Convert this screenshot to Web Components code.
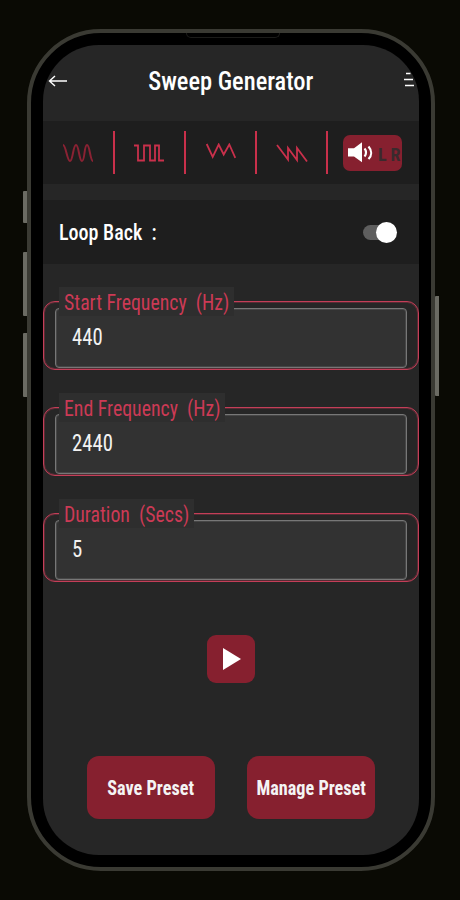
<!DOCTYPE html>
<html><head><meta charset="utf-8"><title>Sweep Generator</title>
<style>
html,body{margin:0;padding:0;background:#0a0a04;height:900px;overflow:hidden}
body{font-family:"Roboto Condensed","Liberation Sans",sans-serif;color:#fff}
</style></head><body>
<phone-frame>
  <title-bar>Sweep Generator</title-bar>
  <tone-bar></tone-bar>
  <loop-row>Loop Back&nbsp; :</loop-row>
  <freq-field label="Start Frequency&nbsp; (Hz)" value="440" w="175"></freq-field>
  <freq-field label="End Frequency&nbsp; (Hz)" value="2440" w="166"></freq-field>
  <freq-field label="Duration&nbsp; (Secs)" value="5" w="135"></freq-field>
  <play-button></play-button>
  <preset-bar>
    <preset-button>Save Preset</preset-button>
    <preset-button>Manage Preset</preset-button>
  </preset-bar>
</phone-frame>
<script>
function def(name,html,extra){
  const C=class extends HTMLElement{
    constructor(){super();this.attachShadow({mode:'open'}).innerHTML=html;}
    connectedCallback(){if(extra)extra(this,this.shadowRoot);}
  };
  customElements.define(name,C);
}
def('phone-frame',`<style>
:host{display:block;position:relative;box-sizing:border-box;width:408px;height:842px;margin:29px 0 0 27px;border:4px solid #3a3a33;border-radius:74px;background:#000;padding:12px}
.screen{width:376px;height:810px;border-radius:56px;background:#262626;overflow:hidden;display:flex;flex-direction:column}
.notch{position:absolute;left:155px;top:0;width:92px;height:4px;border:1px solid #1c1c1a;border-top:0;border-radius:0 0 5px 5px}
.btn{position:absolute;background:#6b6b63;width:4px;border-radius:1px 0 0 1px;left:-8px}
.r{left:auto;right:-8px}
</style>
<div class="notch"></div>
<i class="btn" style="top:158px;height:32px"></i>
<i class="btn" style="top:219px;height:64px"></i>
<i class="btn" style="top:300px;height:64px"></i>
<i class="btn r" style="top:263px;height:100px"></i>
<div class="screen"><slot></slot></div>`);
def('title-bar',`<style>
:host{display:flex;flex:none;height:76px;box-sizing:border-box;position:relative;justify-content:center;padding-top:21px;font-size:26px;font-weight:500;line-height:30px}
svg{position:absolute}
span{display:inline-block;transform:scaleX(.94);white-space:nowrap}
</style>
<svg style="left:5px;top:27px" width="20" height="18" viewBox="0 0 20 18" fill="none" stroke="#fff" stroke-width="1.400"><path d="M19 9H1.500M7 4L1.500 9 7 14"/></svg>
<span><slot></slot></span>
<svg style="left:361px;top:26px" width="12" height="18" viewBox="0 0 12 18" fill="none" stroke="#fff" stroke-width="1.600"><path d="M2 2.500h4.500M0 8.500h9M1 14.500h9"/></svg>`);
def('tone-bar',`<style>
:host{display:grid;flex:none;height:63px;background:#1e1e1e;grid-template-columns:70px 2px 69px 2px 69px 2px 69px 2px 1fr;align-items:center;justify-items:center}
.d{width:2px;height:43px;background:#c9304b;justify-self:stretch}
svg{display:block;flex:none}
.sp{width:59px;height:36px;background:#86202f;border-radius:7px;display:flex;align-items:center;box-sizing:border-box;padding-left:5px;margin-right:2px}
.lr{font:700 18px "Roboto Condensed","Liberation Sans",sans-serif;color:#3a2a2d;letter-spacing:4px;margin-left:4px;line-height:18px;padding-top:4px}
</style>
<svg width="32" height="20" viewBox="0 0 32 20" fill="none" stroke="#8a2233" stroke-width="2"><path d="M1 2C4 2 5 18 8 18S11 2 14 2 17 18 20 18 22 2 25 2 28 18 31 18"/></svg>
<div class="d"></div>
<svg width="32" height="20" viewBox="0 0 32 20" fill="none" stroke="#c9304b" stroke-width="1.800"><path d="M0 2.500h4v15h6v-15h6v15h5v-15h4v15h5"/></svg>
<div class="d"></div>
<svg width="32" height="20" viewBox="0 0 32 20" fill="none" stroke="#c9304b" stroke-width="1.800"><path d="M1.700 1L7.700 14 13.700 1.500 18.700 11.500 24.300 1.500 30.300 14.800"/></svg>
<div class="d"></div>
<svg width="32" height="20" viewBox="0 0 32 20" fill="none" stroke="#c9304b" stroke-width="1.800"><path d="M1 2l11 14.500V5l9 12V5l10 13.500"/></svg>
<div class="d"></div>
<div class="sp"><svg width="26" height="26" viewBox="0 0 26 26"><path fill="#fff" d="M0 8.200h6L14 2.200V22.200L6 16.500H0z"/><path fill="none" stroke="#fff" stroke-width="2.200" d="M16.500 8.500c2 2 2 6 0 8M20.500 6.500c3.500 4 3.500 9 0 12.500"/></svg><span class="lr">LR</span></div>`);
def('loop-row',`<style>
:host{display:flex;flex:none;height:64px;margin-top:16px;background:#1e1e1e;align-items:center;box-sizing:border-box;padding-left:16px;font-size:22px;font-weight:500;position:relative;justify-content:space-between}
b{font-weight:inherit;display:inline-block;transform:scaleX(.91);transform-origin:left;white-space:nowrap}
.t{display:block;width:34px;height:21px;position:relative;margin-right:22px}
.t::before{content:"";position:absolute;left:0;top:3px;width:24px;height:15px;border-radius:8px;background:#5e5e5e}
.t::after{content:"";position:absolute;right:0;top:0;width:21px;height:21px;border-radius:50%;background:#fff}
</style><b><slot></slot></b><span class="t"></span>`);
def('freq-field',`<style>
:host{display:block;flex:none;position:relative;box-sizing:border-box;width:376px;height:69px;margin-top:37px;border:1px solid #c43e58;border-radius:12px;box-shadow:inset 0 0 0 1px rgba(181,56,79,.35)}
.i{box-sizing:border-box;margin:6px 11px 0;height:60px;border:1px solid #777;border-radius:4px;background:#323232;box-shadow:inset 0 0 0 1px rgba(110,110,110,.35);padding:13px 16px;font-size:23px;line-height:32px;color:#f2f2f2}
.i b{font-weight:400;display:inline-block;transform:scaleX(.9);transform-origin:left}
.l{position:absolute;left:15px;top:-15px;background:#2e2e2e;height:29px;padding:0 0 0 5px;line-height:32px;font-size:22px;color:#cc3a55;white-space:nowrap;box-sizing:border-box}
.l b{font-weight:400;display:inline-block;transform:scaleX(.9);transform-origin:left}
</style><div class="i"><b id="v"></b></div><div class="l" id="lb"><b id="l"></b></div>`,(e,s)=>{
  s.getElementById('v').textContent=e.getAttribute('value');
  s.getElementById('l').textContent=e.getAttribute('label');
  s.getElementById('lb').style.width=e.getAttribute('w')+'px';
});
def('play-button',`<style>
:host{display:flex;flex:none;width:48px;height:48px;margin:53px 0 0 164px;background:#86202f;border-radius:9px;align-items:center;justify-content:center}
</style><svg width="18" height="22" viewBox="0 0 18 22" style="margin-left:2px"><path fill="#fff" d="M0 0l18 11L0 22z"/></svg>`);
def('preset-bar',`<style>:host{display:flex;flex:none;margin:73px 0 0 44px;gap:32px}</style><slot></slot>`);
def('preset-button',`<style>
:host{display:flex;width:128px;height:63px;background:#86202f;border-radius:12px;align-items:center;justify-content:center;font-size:20px;font-weight:700;color:#f4f4f4}
b{font-weight:inherit;display:inline-block;transform:scaleX(.91);white-space:nowrap}
</style><b><slot></slot></b>`);
</script>
</body></html>
